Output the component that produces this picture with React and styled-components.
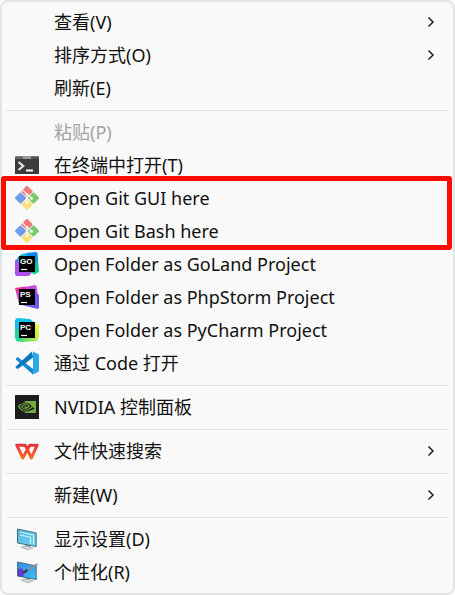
import React from "react";
import styled, { createGlobalStyle } from "styled-components";
import { SiNvidia } from "react-icons/si";

const GlobalStyle = createGlobalStyle`
  * { box-sizing: border-box; }
  body {
    margin: 0;
    background: #fdfdfd;
    font-family: "Noto Sans", "Noto Sans CJK SC", sans-serif;
  }
`;

const Menu = styled.div`
  padding: 4px 5px 4px 4px;
  border: 2px solid #e4e4e4;
  border-radius: 8px;
  background: #f9f9f9;
`;

const Item = styled.button`
  display: flex;
  align-items: center;
  gap: 15px;
  width: 100%;
  height: 33px;
  padding: 0 13px 2px 9px;
  border: 0;
  border-radius: 4px;
  background: transparent;
  color: #111;
  font: inherit;
  font-size: 18px;
  line-height: 24px;
  text-align: left;
  white-space: nowrap;

  &:hover:enabled { background: #f0f0f0; }
  &:disabled { color: #a3a3a3; }
`;

const IconSlot = styled.span`
  display: flex;
  flex: none;
  align-items: center;
  justify-content: center;
  width: 24px;
  height: 24px;
`;

const Label = styled.span`
  flex: 1;
`;

const Separator = styled.hr`
  height: 1px;
  margin: 5px 0;
  border: 0;
  background: #e3e3e3;
`;

const Highlight = styled.div`
  position: relative;

  &::after {
    content: "";
    position: absolute;
    inset: -6px -4px -2px -5px;
    border: 5px solid #fb0d06;
    border-radius: 3px;
    pointer-events: none;
  }
`;

const NvidiaTile = styled.span`
  display: flex;
  align-items: center;
  justify-content: center;
  width: 24px;
  height: 24px;
  background: #1b1c1b;
  color: #72ab40;
`;

const Svg = ({ children }) => (
  <svg width="24" height="24" viewBox="0 0 24 24" aria-hidden="true">{children}</svg>
);

const Chevron = () => (
  <svg width="8" height="12" viewBox="0 0 8 12" aria-hidden="true">
    <path d="M1.5 1.5 6 6 1.5 10.5" fill="none" stroke="#222" strokeWidth="1.5" />
  </svg>
);

const TerminalIcon = () => (
  <Svg>
    <path d="M0 4.5a1 1 0 0 1 1-1h22a1 1 0 0 1 1 1V21H0z" fill="#3b3b3b" />
    <path d="M0 6V4.5a1 1 0 0 1 1-1h7V6z" fill="#666" />
    <path d="M8 3.5h8V6H8z" fill="#9a9a9a" />
    <path d="M16 3.5h7a1 1 0 0 1 1 1V6h-8z" fill="#555" />
    <path d="m3.5 9 4.7 4-4.7 4" fill="none" stroke="#e4e4e4" strokeWidth="2.2" />
    <path d="M11 17.5h7" stroke="#fff" strokeWidth="2" />
  </Svg>
);

const GitIcon = () => (
  <Svg>
    <g transform="rotate(45 12 12)">
      <rect x="3.2" y="3.2" width="8.4" height="8.4" rx="1" fill="#f07878" />
      <rect x="12.4" y="3.2" width="8.4" height="8.4" rx="1" fill="#7cc86a" />
      <rect x="3.2" y="12.4" width="8.4" height="8.4" rx="1" fill="#6f9bed" />
      <rect x="12.4" y="12.4" width="8.4" height="8.4" rx="1" fill="#fbe07e" />
    </g>
    <path d="m7.5 3.8 4.4 4.4v8.6m0-8.6 4.8 4" fill="none" stroke="#f9f9f9" strokeWidth="1.1" />
    <circle cx="11.9" cy="8.3" r="1.4" fill="#f9f9f9" />
    <circle cx="16.4" cy="12.2" r="1.5" fill="#f9f9f9" />
    <circle cx="11.9" cy="16.6" r="1.5" fill="#f9f9f9" />
  </Svg>
);

const IdeText = styled.text`
  fill: #fff;
  font: 700 8px "Liberation Sans", sans-serif;
`;

const IdeFace = ({ code }) => (
  <>
    <path d="M4 4h16v16H4z" fill="#000" />
    <IdeText x="5" y="12">{code}</IdeText>
    <path d="M6 17.5h6" stroke="#fff" strokeWidth="1.2" />
  </>
);

const GoLandIcon = () => (
  <Svg>
    <defs>
      <linearGradient id="golandBlue" x1="0" y1="0" x2="1" y2="1">
        <stop offset="0" stopColor="#1695ef" />
        <stop offset=".45" stopColor="#087cfa" />
        <stop offset=".8" stopColor="#0bd08f" />
      </linearGradient>
    </defs>
    <path d="M0 8.5 5 5l12 11-1 6-2.5 2H1l-1-2z" fill="#b150ee" />
    <path d="m11 1 10-1 1.5 1L24 20l-5 2.5L9 16z" fill="url(#golandBlue)" />
    <path d="m2 6 5-4 5-1 2 5-10 8z" fill="#15b5d5" />
    <IdeFace code="GO" />
  </Svg>
);

const PhpStormIcon = () => (
  <Svg>
    <defs>
      <linearGradient id="phpPink" x1="0" y1="0" x2="0" y2="1">
        <stop offset="0" stopColor="#f22f88" />
        <stop offset="1" stopColor="#b74af7" />
      </linearGradient>
    </defs>
    <path d="m0 3 10-1.5L18 4v14L6 20l-2-1z" fill="url(#phpPink)" />
    <path d="m10 2 10-2 1.5 1L23 11l-8 6z" fill="#c549df" />
    <path d="m18 6 6 4v13l-1.5 1L7 20l-2-2z" fill="#7756ee" />
    <IdeFace code="PS" />
  </Svg>
);

const PyCharmIcon = () => (
  <Svg>
    <defs>
      <linearGradient id="pyGreen" x1="0" y1="1" x2="1" y2="0">
        <stop offset="0" stopColor="#21d789" />
        <stop offset=".5" stopColor="#b7e84b" />
        <stop offset="1" stopColor="#fcf84a" />
      </linearGradient>
    </defs>
    <path d="m0 2 2-2 13 1 5 4-2 12-14 1-4-3z" fill="#13bfe7" />
    <path d="m18 4 6 3v11l-2 5-16 1-4-1 2-7z" fill="url(#pyGreen)" />
    <path d="M0 12v8l2 4 6-4-2-9z" fill="#20d3a0" />
    <IdeFace code="PC" />
  </Svg>
);

const CodeIcon = () => (
  <Svg>
    <path d="M1 7.3 2.6 6l3 2.2L18 18v5.5L.8 8.4z" fill="#1689cf" />
    <path d="M.6 15.8 16.8.4l1.5 5.8L5.5 16l-2.9 2-1.8-1.3z" fill="#0878be" />
    <path d="M17 .3 23.2 3a1.4 1.4 0 0 1 .8 1.2v15.6a1.4 1.4 0 0 1-.8 1.2L17 23.7l1-1V1.3z" fill="#2ba7ee" />
  </Svg>
);

const WpsIcon = () => (
  <Svg>
    <defs>
      <linearGradient id="wpsRed" x1="0" y1="0" x2="0" y2="1">
        <stop offset="0" stopColor="#e8313b" />
        <stop offset="1" stopColor="#ff6b20" />
      </linearGradient>
    </defs>
    <path
      d="M1.8 6.2h8.4L16.4 19l5.7-12.8h-7.3L7.8 19z"
      fill="none"
      stroke="url(#wpsRed)"
      strokeWidth="3"
      strokeLinejoin="round"
    />
  </Svg>
);

const MonitorBody = ({ from, to, id }) => (
  <>
    <defs>
      <linearGradient id={id} x1="0" y1="0" x2="1" y2="1">
        <stop offset="0" stopColor={from} />
        <stop offset="1" stopColor={to} />
      </linearGradient>
    </defs>
    <path d="m10 17 5 1v3l-5-1z" fill="#92a0a8" />
    <path d="m6 20 6-1 6 2-5 2z" fill="#d3d7da" stroke="#999fa3" strokeWidth=".6" />
    <path d="m2.5 2 18.7 4v13.5L2.5 16z" fill={`url(#${id})`} stroke="#456e82" strokeWidth="1" />
  </>
);

const DisplayIcon = () => (
  <Svg>
    <MonitorBody id="displayBlue" from="#52b5df" to="#77d4f3" />
    <path d="m5 5 13.5 3v9M5 8l10.5 2.2V17" fill="none" stroke="#ccf4ff" strokeWidth="1" />
  </Svg>
);

const PersonalizeIcon = () => (
  <Svg>
    <MonitorBody id="personalBlue" from="#3488e5" to="#45bff5" />
    <path d="m3 9 4-.5 2 3.5-1 5-5-1z" fill="#6838d4" />
    <path d="m8 13 5-3.2" stroke="#343c5a" strokeWidth="2.4" />
    <path d="m12.5 10 10-6" stroke="#8b9095" strokeWidth="1.7" />
  </Svg>
);

const NvidiaIcon = () => (
  <NvidiaTile><SiNvidia size={18} aria-hidden="true" /></NvidiaTile>
);

const MenuItem = ({ icon: Icon, label, submenu, disabled }) => (
  <Item type="button" role="menuitem" disabled={disabled} aria-haspopup={submenu ? "menu" : undefined}>
    <IconSlot>{Icon && <Icon />}</IconSlot>
    <Label>{label}</Label>
    {submenu && <Chevron />}
  </Item>
);

export default function App() {
  return (
    <>
      <GlobalStyle />
      <Menu role="menu">
        <MenuItem label="查看(V)" submenu />
        <MenuItem label="排序方式(O)" submenu />
        <MenuItem label="刷新(E)" />
        <Separator />
        <MenuItem label="粘贴(P)" disabled />
        <MenuItem icon={TerminalIcon} label="在终端中打开(T)" />
        <Highlight role="group">
          <MenuItem icon={GitIcon} label="Open Git GUI here" />
          <MenuItem icon={GitIcon} label="Open Git Bash here" />
        </Highlight>
        <MenuItem icon={GoLandIcon} label="Open Folder as GoLand Project" />
        <MenuItem icon={PhpStormIcon} label="Open Folder as PhpStorm Project" />
        <MenuItem icon={PyCharmIcon} label="Open Folder as PyCharm Project" />
        <MenuItem icon={CodeIcon} label="通过 Code 打开" />
        <Separator />
        <MenuItem icon={NvidiaIcon} label="NVIDIA 控制面板" />
        <Separator />
        <MenuItem icon={WpsIcon} label="文件快速搜索" submenu />
        <Separator />
        <MenuItem label="新建(W)" submenu />
        <Separator />
        <MenuItem icon={DisplayIcon} label="显示设置(D)" />
        <MenuItem icon={PersonalizeIcon} label="个性化(R)" />
      </Menu>
    </>
  );
}
